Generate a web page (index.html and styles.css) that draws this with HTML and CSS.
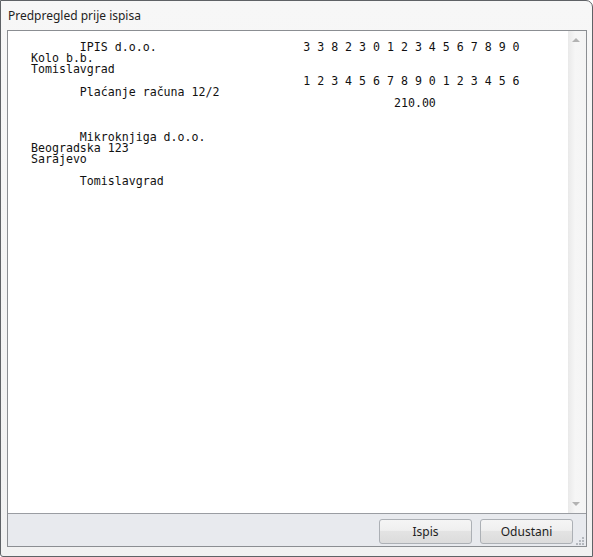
FILE: index.html
```html
<!DOCTYPE html>
<html>
<head>
<meta charset="utf-8">
<link rel="stylesheet" href="styles.css">
</head>
<body>
<div class="window">
  <div class="title">Predpregled prije ispisa</div>
  <div class="frame">
    <div class="view">
      <pre class="paper">       IPIS d.o.o.                     3 3 8 2 3 0 1 2 3 4 5 6 7 8 9 0
Kolo b.b.
Tomislavgrad
                                       1 2 3 4 5 6 7 8 9 0 1 2 3 4 5 6
       Plaćanje računa 12/2
                                                    210.00


       Mikroknjiga d.o.o.
Beogradska 123
Sarajevo

       Tomislavgrad</pre>
      <div class="scrollbar">
        <span class="arrow up"></span>
        <span class="arrow down"></span>
      </div>
    </div>
    <div class="buttons">
      <button class="btn">Ispis</button>
      <button class="btn">Odustani</button>
      <span class="grip">
        <svg width="9" height="9" viewBox="0 0 9 9">
          <g fill="#b4b8be">
            <rect x="7" y="1" width="2" height="2"/>
            <rect x="4" y="4" width="2" height="2"/>
            <rect x="7" y="4" width="2" height="2"/>
            <rect x="1" y="7" width="2" height="2"/>
            <rect x="4" y="7" width="2" height="2"/>
            <rect x="7" y="7" width="2" height="2"/>
          </g>
        </svg>
      </span>
    </div>
  </div>
</div>
</body>
</html>
```
FILE: styles.css
```css
* { box-sizing: border-box; }
html, body { margin: 0; padding: 0; background: #ffffff; }
.window {
  width: 593px;
  height: 557px;
  border: 1px solid #5f6266;
  border-radius: 0 7px 0 3px;
  background: linear-gradient(#f7f7f7, #f1f1f1);
  display: flex;
  flex-direction: column;
  overflow: hidden;
}
.title {
  height: 29px;
  padding-left: 7px;
  font-family: "Noto Sans", "Open Sans", sans-serif;
  font-size: 12px;
  line-height: 29px;
  color: #1e1e1e;
  white-space: nowrap;
}
.frame {
  margin: 0 5px 0 6px;
  height: 517px;
  border: 1px solid #8b8e92;
  display: flex;
  flex-direction: column;
  background: #ffffff;
}
.view {
  flex: 1;
  display: flex;
  min-height: 0;
}
.paper {
  flex: 1;
  margin: 0;
  padding: 11px 0 0 23px;
  font-family: "DejaVu Sans Mono", "Liberation Mono", monospace;
  font-size: 11.6px;
  line-height: 11.2px;
  color: #111111;
  overflow: hidden;
}
.scrollbar {
  width: 18px;
  position: relative;
  background: linear-gradient(to right, #e9e9e9, #f6f6f6 40%, #f4f4f4);
}
.arrow {
  position: absolute;
  left: 4px;
  width: 0;
  height: 0;
  border-left: 4px solid transparent;
  border-right: 4px solid transparent;
}
.arrow.up {
  top: 7px;
  border-bottom: 4px solid #b3b3b3;
}
.arrow.down {
  bottom: 7px;
  border-top: 4px solid #b3b3b3;
}
.buttons {
  height: 33px;
  border-top: 1px solid #9a9da2;
  background: #e8eaee;
  display: flex;
  justify-content: flex-end;
  align-items: flex-start;
  gap: 8px;
  padding: 5px 13px 0 0;
  position: relative;
}
.btn {
  width: 93px;
  height: 25px;
  border: 1px solid #acb0b5;
  border-radius: 3px;
  background: linear-gradient(#f5f5f5, #efefef 45%, #e3e3e3 50%, #dcdcdc);
  font-family: "Noto Sans", "Open Sans", sans-serif;
  font-size: 12px;
  color: #1e1e1e;
  padding: 0;
}
.grip {
  position: absolute;
  right: 2px;
  bottom: 1px;
  width: 9px;
  height: 9px;
  display: block;
}
.grip svg { display: block; }
```
